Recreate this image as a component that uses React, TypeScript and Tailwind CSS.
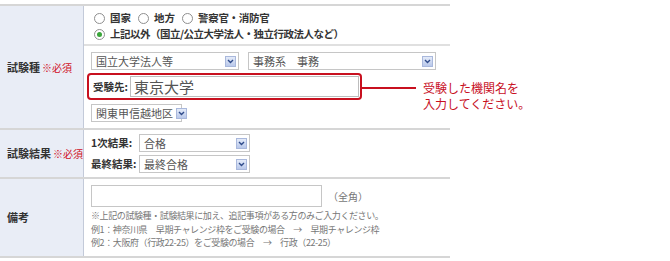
import React from "react";

const Chevron = () => (
  <span className="flex h-[11px] w-[11px] shrink-0 items-center justify-center border border-[#a9b8dc] bg-gradient-to-b from-[#e4ebf9] to-[#b9c8ea]">
    <svg width="7" height="5" viewBox="0 0 7 5">
      <path d="M1 1l2.5 2.5L6 1" stroke="#2e4a8a" strokeWidth="1.4" fill="none" />
    </svg>
  </span>
);

type SelectProps = { value: string; className: string };

const Select = ({ value, className }: SelectProps) => (
  <div
    className={`flex h-[18px] items-center justify-between gap-[3px] whitespace-nowrap border border-[#c6c6c6] bg-white pl-[4px] pr-[2px] text-[11px] leading-none text-[#555] ${className}`}
  >
    <span>{value}</span>
    <Chevron />
  </div>
);

const Radio = ({ checked }: { checked?: boolean }) => (
  <span className="flex h-[11px] w-[11px] shrink-0 items-center justify-center rounded-full border border-[#8f8f8f] bg-white">
    {checked && <span className="h-[5px] w-[5px] rounded-full bg-[#3aa53a]" />}
  </span>
);

const Label = ({ title, required }: { title: string; required?: boolean }) => (
  <div className="flex w-[84px] shrink-0 items-center whitespace-nowrap border-r border-[#c3cad9] bg-[#e9edf6] pl-[7px] text-[11px] font-bold text-[#333]">
    {title}
    {required && <span className="ml-[2px] text-[10px] font-normal text-[#d0101f]">※必須</span>}
  </div>
);

export default function App() {
  return (
    <div className="relative h-[261px] w-[670px] bg-white pt-[4px] font-['Noto_Sans_CJK_JP',sans-serif] text-[#333]">
      <div className="w-[450px] border-t-2 border-[#d6d6d6]">
        {/* 試験種 */}
        <div className="flex h-[124px] border-b-2 border-[#d6d6d6]">
          <Label title="試験種" required />
          <div className="flex flex-1 flex-col">
            <div className="flex h-[40px] flex-col border-b-2 border-[#e0e0e0] pl-[10px] pt-[4px] text-[10.5px] font-bold">
              <div className="flex h-[16px] items-center">
                <Radio />
                <span className="ml-[5px]">国家</span>
                <span className="ml-[7px]"><Radio /></span>
                <span className="ml-[5px]">地方</span>
                <span className="ml-[7px]"><Radio /></span>
                <span className="ml-[5px] tracking-[-0.3px]">警察官・消防官</span>
              </div>
              <div className="flex h-[16px] items-center">
                <Radio checked />
                <span className="ml-[5px] tracking-[-0.5px]">上記以外（国立/公立大学法人・独立行政法人など）</span>
              </div>
            </div>
            <div className="flex flex-col pl-[7px] pt-[6px]">
              <div className="flex gap-[9px]">
                <Select value="国立大学法人等" className="w-[148px]" />
                <Select value="事務系　事務" className="w-[188px]" />
              </div>
              <div className="-ml-[4px] mt-[3px] flex h-[27px] w-[275px] items-center rounded-[4px] border-2 border-[#c8101f] pl-[4px]">
                <span className="text-[10.5px] font-bold">受験先:</span>
                <div className="ml-[2px] flex h-[21px] w-[229px] items-center border border-[#bdbdbd] pl-[3px] text-[15px] leading-none text-[#555]">
                  東京大学
                </div>
              </div>
              <Select value="関東甲信越地区" className="mt-[4px] w-[91px]" />
            </div>
          </div>
        </div>
        {/* 試験結果 */}
        <div className="flex h-[49px] border-b-2 border-[#d6d6d6]">
          <Label title="試験結果" required />
          <div className="flex flex-col gap-[3px] pl-[7px] pt-[4px]">
            <div className="flex items-center">
              <span className="w-[48px] text-[10.5px] font-bold">1次結果:</span>
              <Select value="合格" className="w-[111px]" />
            </div>
            <div className="flex items-center">
              <span className="w-[48px] text-[10.5px] font-bold">最終結果:</span>
              <Select value="最終合格" className="w-[111px]" />
            </div>
          </div>
        </div>
        {/* 備考 */}
        <div className="flex h-[79px] border-b-2 border-[#d6d6d6]">
          <Label title="備考" />
          <div className="flex flex-col pl-[7px] pt-[6px]">
            <div className="flex items-center">
              <div className="h-[22px] w-[231px] border border-[#c6c6c6] bg-white" />
              <span className="ml-[6px] text-[10px] text-[#777]">（全角）</span>
            </div>
            <div className="mt-[2px] text-[9px] leading-[13.5px] tracking-[-0.4px] text-[#777]">
              <div>※上記の試験種・試験結果に加え、追記事項がある方のみご入力ください。</div>
              <div>例1：神奈川県　早期チャレンジ枠をご受験の場合　→　早期チャレンジ枠</div>
              <div>例2：大阪府（行政22-25）をご受験の場合　→　行政（22-25）</div>
            </div>
          </div>
        </div>
      </div>
      {/* callout */}
      <div className="absolute left-[362px] top-[87px] h-[2px] w-[54px] bg-[#c8101f]" />
      <div className="absolute left-[423px] top-[80px] text-[12px] leading-[16px] text-[#c8101f]">
        <div>受験した機関名を</div>
        <div>入力してください。</div>
      </div>
    </div>
  );
}
